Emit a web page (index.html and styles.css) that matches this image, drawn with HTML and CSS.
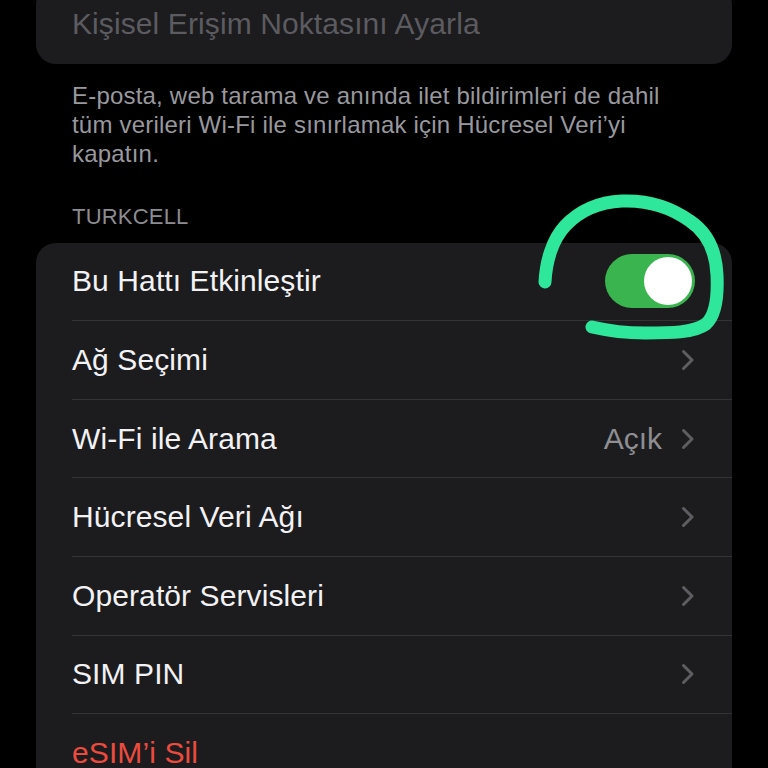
FILE: index.html
```html
<!DOCTYPE html>
<html lang="tr">
<head>
<meta charset="utf-8">
<link rel="stylesheet" href="styles.css">
</head>
<body>
<div class="page">
  <div class="card top-card">
    <div class="row"><span class="label disabled">Kişisel Erişim Noktasını Ayarla</span></div>
  </div>
  <p class="footnote">E-posta, web tarama ve anında ilet bildirimleri de dahil tüm verileri Wi-Fi ile sınırlamak için Hücresel Veri’yi kapatın.</p>
  <div class="header">TURKCELL</div>
  <div class="card">
    <div class="row">
      <span class="label">Bu Hattı Etkinleştir</span>
      <span class="toggle"><span class="knob"></span></span>
    </div>
    <div class="row">
      <span class="label">Ağ Seçimi</span>
      <svg class="chev" viewBox="0 0 14 22"><path d="M2.5 2.5 L11 11 L2.5 19.5"/></svg>
    </div>
    <div class="row">
      <span class="label">Wi-Fi ile Arama</span>
      <span class="value">Açık</span>
      <svg class="chev" viewBox="0 0 14 22"><path d="M2.5 2.5 L11 11 L2.5 19.5"/></svg>
    </div>
    <div class="row">
      <span class="label">Hücresel Veri Ağı</span>
      <svg class="chev" viewBox="0 0 14 22"><path d="M2.5 2.5 L11 11 L2.5 19.5"/></svg>
    </div>
    <div class="row">
      <span class="label">Operatör Servisleri</span>
      <svg class="chev" viewBox="0 0 14 22"><path d="M2.5 2.5 L11 11 L2.5 19.5"/></svg>
    </div>
    <div class="row">
      <span class="label">SIM PIN</span>
      <svg class="chev" viewBox="0 0 14 22"><path d="M2.5 2.5 L11 11 L2.5 19.5"/></svg>
    </div>
    <div class="row">
      <span class="label danger">eSIM’i Sil</span>
    </div>
  </div>
</div>
<svg class="scribble" viewBox="0 0 768 768" width="768" height="768">
  <path d="M545 282 C546 262 552 240 565 226 C580 210 600 202 622 201 C648 200 672 208 690 221 C708 233 716 252 717 275 C718 296 716 315 706 324 C694 333 670 333 645 333 C625 333 605 330 592 327"/>
</svg>
</body>
</html>
```
FILE: styles.css
```css
html, body {
  margin: 0;
  padding: 0;
  background: #000;
  width: 768px;
  height: 768px;
  overflow: hidden;
}
body {
  position: relative;
  font-family: "Liberation Sans", Arial, sans-serif;
  -webkit-font-smoothing: antialiased;
}
.page {
  padding: 0 36px;
}
.card {
  background: #1c1c1e;
  border-radius: 20px;
  overflow: hidden;
}
.top-card {
  margin-top: -15px;
}
.row {
  height: 78.6px;
  box-sizing: border-box;
  display: flex;
  align-items: center;
  margin-left: 36px;
  padding-right: 37px;
  border-bottom: 1px solid #333336;
}
.row:last-child {
  border-bottom: none;
}
.label {
  flex: 1;
  font-size: 30px;
  color: #f2f2f4;
  letter-spacing: 0.1px;
}
.label.disabled {
  color: #5b5b60;
}
.label.danger {
  color: #ec4b3e;
}
.value {
  font-size: 30px;
  color: #8e8e93;
  margin-right: 19px;
}
.chev {
  width: 14px;
  height: 22px;
  fill: none;
  stroke: #5d5d62;
  stroke-width: 3;
  stroke-linecap: round;
  stroke-linejoin: round;
}
.toggle {
  width: 90px;
  height: 54px;
  border-radius: 27px;
  background: #3ab44e;
  position: relative;
  box-sizing: border-box;
}
.knob {
  position: absolute;
  right: 3px;
  top: 3px;
  width: 48px;
  height: 48px;
  border-radius: 50%;
  background: #fff;
}
.footnote {
  margin: 17px 0 0 36px;
  width: 605px;
  font-size: 24px;
  line-height: 29px;
  letter-spacing: 0.2px;
  color: #98989e;
}
.header {
  margin: 37px 0 14px 36px;
  font-size: 22px;
  line-height: 24px;
  letter-spacing: 0.2px;
  color: #8c8c92;
}
.scribble {
  position: absolute;
  left: 0;
  top: 0;
  fill: none;
  stroke: #2fe79b;
  stroke-width: 13;
  stroke-linecap: round;
  stroke-linejoin: round;
}
```
